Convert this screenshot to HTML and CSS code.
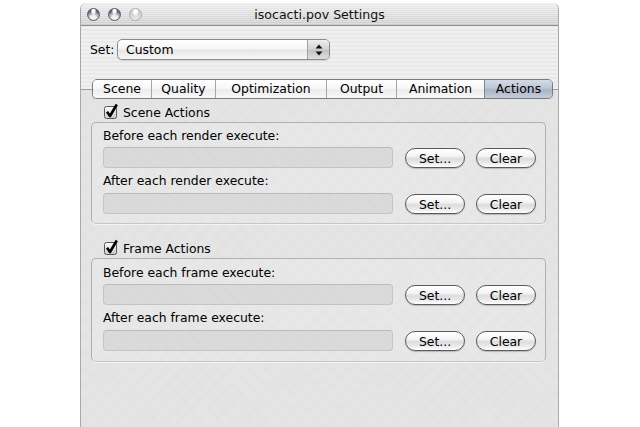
FILE: index.html
```html
<!DOCTYPE html>
<html>
<head>
<meta charset="utf-8">
<title>isocacti.pov Settings</title>
<link rel="stylesheet" href="styles.css">
</head>
<body>
<div class="window">
  <div class="titlebar">
    <div class="lights">
      <span class="light"></span>
      <span class="light"></span>
      <span class="light dim"></span>
    </div>
    <div class="title">isocacti.pov Settings</div>
    <div></div>
  </div>

  <div class="setrow">
    <span class="setlabel">Set:</span>
    <div class="popup">
      <span class="popup-text">Custom</span>
      <span class="stepper">
        <svg width="8" height="12" viewBox="0 0 8 12"><path d="M4 0.5 L7.5 4.5 L0.5 4.5 Z" fill="#111"/><path d="M4 11.5 L7.5 7.5 L0.5 7.5 Z" fill="#111"/></svg>
      </span>
    </div>
  </div>

  <div class="tabbar">
    <div class="tabs">
      <div class="tab t-scene">Scene</div>
      <div class="tab t-quality">Quality</div>
      <div class="tab t-opt">Optimization</div>
      <div class="tab t-output">Output</div>
      <div class="tab t-anim">Animation</div>
      <div class="tab t-actions selected">Actions</div>
    </div>
  </div>

  <div class="panel">
    <div class="check first">
      <svg class="cb" width="15" height="17" viewBox="0 0 15 17">
        <defs><linearGradient id="cbg" x1="0" y1="0" x2="0" y2="1"><stop offset="0" stop-color="#ffffff"/><stop offset="1" stop-color="#c8c8c8"/></linearGradient></defs>
        <rect x="0.5" y="3.5" width="12" height="12" rx="2" fill="url(#cbg)" stroke="#555"/>
        <path d="M3 8.8 L6 13 L12.8 1.5" fill="none" stroke="#000" stroke-width="2.6" stroke-linejoin="round"/>
      </svg>
      <span>Scene Actions</span>
    </div>
    <div class="group g1">
      <div class="flabel">Before each render execute:</div>
      <div class="frow">
        <div class="field"></div>
        <div class="btn b-set">Set...</div>
        <div class="btn b-clear">Clear</div>
      </div>
      <div class="flabel second">After each render execute:</div>
      <div class="frow">
        <div class="field"></div>
        <div class="btn b-set">Set...</div>
        <div class="btn b-clear">Clear</div>
      </div>
    </div>

    <div class="check later">
      <svg class="cb" width="15" height="17" viewBox="0 0 15 17">
        <defs><linearGradient id="cbg2" x1="0" y1="0" x2="0" y2="1"><stop offset="0" stop-color="#ffffff"/><stop offset="1" stop-color="#c8c8c8"/></linearGradient></defs>
        <rect x="0.5" y="3.5" width="12" height="12" rx="2" fill="url(#cbg2)" stroke="#555"/>
        <path d="M3 8.8 L6 13 L12.8 1.5" fill="none" stroke="#000" stroke-width="2.6" stroke-linejoin="round"/>
      </svg>
      <span>Frame Actions</span>
    </div>
    <div class="group g2">
      <div class="flabel">Before each frame execute:</div>
      <div class="frow">
        <div class="field"></div>
        <div class="btn b-set">Set...</div>
        <div class="btn b-clear">Clear</div>
      </div>
      <div class="flabel second">After each frame execute:</div>
      <div class="frow">
        <div class="field"></div>
        <div class="btn b-set">Set...</div>
        <div class="btn b-clear">Clear</div>
      </div>
    </div>
  </div>
</div>
</body>
</html>
```

FILE: styles.css
```css
* { box-sizing: border-box; }

html, body {
  margin: 0;
  padding: 0;
  background: #ffffff;
}

body {
  font-family: "DejaVu Sans", "Liberation Sans", sans-serif;
  font-size: 12.4px;
  color: #000;
  height: 427px;
  overflow: hidden;
}

.window {
  margin: 3px 0 0 80px;
  width: 479px;
  height: 424px;
  display: flex;
  flex-direction: column;
  border-left: 1px solid #a9a9a9;
  border-right: 1px solid #a9a9a9;
  border-radius: 6px 6px 0 0;
  overflow: hidden;
  background:
    repeating-linear-gradient(to bottom, #f0f0f0 0 2px, #e9e9e9 2px 4px);
}

/* title bar */
.titlebar {
  height: 23px;
  flex: none;
  display: grid;
  grid-template-columns: 1fr auto 1fr;
  align-items: center;
  border-bottom: 1px solid #8f8f8f;
  background:
    repeating-linear-gradient(to bottom, rgba(255,255,255,0.35) 0 1px, rgba(255,255,255,0) 1px 2px),
    linear-gradient(to bottom, #ececec 0%, #dcdcdc 55%, #cbcbcb 100%);
}

.lights {
  display: flex;
  gap: 8px;
  padding-left: 6px;
}

.light {
  width: 13px;
  height: 13px;
  border-radius: 50%;
  border: 1px solid #555b64;
  background:
    radial-gradient(circle at 50% 80%, #eef1f5 0 22%, rgba(238,241,245,0) 62%),
    radial-gradient(ellipse at 50% 16%, #ffffff 0 16%, rgba(255,255,255,0) 38%),
    linear-gradient(to bottom, #4d5460 0%, #858d99 55%, #cdd3db 100%);
}

.light.dim {
  border-color: #a9adb3;
  background:
    radial-gradient(ellipse at 50% 18%, #ffffff 0 20%, rgba(255,255,255,0) 45%),
    linear-gradient(to bottom, #bfc3c8 0%, #d7d9dc 60%, #eceef0 100%);
}

.title {
  font-size: 12.6px;
  color: #111;
  white-space: nowrap;
  padding-top: 1px;
}

/* Set popup row */
.setrow {
  flex: none;
  display: flex;
  align-items: center;
  margin-top: 13px;
  padding-left: 9px;
  height: 21px;
}

.setlabel {
  width: 27px;
}

.popup {
  width: 213px;
  height: 21px;
  display: flex;
  align-items: center;
  border: 1px solid #8a8a8a;
  border-radius: 5px;
  overflow: hidden;
  background: linear-gradient(to bottom, #ffffff 0%, #f6f6f6 45%, #e6e6e6 55%, #f7f7f7 100%);
  box-shadow: 0 1px 1px rgba(0,0,0,0.12);
}

.popup-text {
  flex: 1;
  padding-left: 8px;
}

.stepper {
  width: 22px;
  height: 100%;
  display: flex;
  align-items: center;
  justify-content: center;
  border-left: 1px solid #a2a2a2;
  background: linear-gradient(to bottom, #eeeeee 0%, #d2d2d2 50%, #c0c0c0 52%, #dedede 100%);
}

/* tabs */
.tabbar {
  flex: none;
  margin-top: 19px;
  height: 20px;
  padding-left: 11px;
  background: linear-gradient(to bottom, rgba(0,0,0,0) 0 10px, #9c9c9c 10px 11px, #e3e3e3 11px);
}

.tabs {
  display: flex;
  width: 461px;
  height: 20px;
  border: 1px solid #7c7c7c;
  border-radius: 5px;
  overflow: hidden;
  box-shadow: 0 1px 1px rgba(0,0,0,0.15);
}

.tab {
  height: 18px;
  display: flex;
  align-items: center;
  justify-content: center;
  line-height: 18px;
  color: #000;
  background: linear-gradient(to bottom, #ffffff 0%, #f7f7f7 45%, #ececec 55%, #f9f9f9 100%);
  border-left: 1px solid #a7a7a7;
}

.tab:first-child { border-left: none; }

.t-scene { width: 58px; }
.t-quality { width: 64px; }
.t-opt { width: 111px; }
.t-output { width: 70px; }
.t-anim { width: 88px; }
.t-actions { width: 68px; }

.tab.selected {
  border-left-color: #7d8796;
  background: linear-gradient(to bottom, #d4dbe5 0%, #bcc6d4 45%, #a9b5c6 55%, #c4cdd9 100%);
}

/* panel */
.panel {
  flex: 1;
  padding-left: 10px;
  background:
    repeating-linear-gradient(45deg, rgba(255,255,255,0.1) 0 1px, rgba(255,255,255,0) 1px 2px),
    repeating-linear-gradient(-45deg, rgba(0,0,0,0.015) 0 1px, rgba(0,0,0,0) 1px 2px),
    #e4e4e4;
}

.check {
  display: flex;
  align-items: flex-end;
  height: 17px;
  padding-left: 13px;
  line-height: 15px;
}

.check.first { margin-top: 4px; }
.check.later { margin-top: 15px; }

.cb {
  flex: none;
  margin-right: 4px;
}

.group {
  width: 455px;
  border: 1px solid #b0b0b0;
  border-bottom-color: #c6c6c6;
  border-radius: 5px;
  background: rgba(255,255,255,0.12);
  padding: 5px 0 9px 11px;
  box-shadow: 0 1px 0 rgba(255,255,255,0.6);
}

.g1 { margin-top: 2px; }
.g2 { margin-top: 2px; padding-top: 6px; padding-bottom: 10px; }

.flabel {
  height: 16px;
  line-height: 16px;
}

.flabel.second { margin-top: 5px; }

.frow {
  display: flex;
  align-items: flex-end;
  margin-top: 3px;
}

.flabel.second + .frow { margin-top: 4px; }

.field {
  width: 290px;
  height: 21px;
  border: 1px solid #c4c4c4;
  border-top-color: #bababa;
  border-radius: 4px;
  background:
    repeating-linear-gradient(45deg, rgba(0,0,0,0.025) 0 1px, rgba(0,0,0,0) 1px 3px),
    #dbdbdb;
}

.btn {
  width: 60px;
  height: 20px;
  display: flex;
  align-items: center;
  justify-content: center;
  border: 1px solid #5a5a5a;
  border-radius: 10px;
  color: #000;
  background: linear-gradient(to bottom, #ffffff 0%, #f4f4f4 40%, #dcdcdc 55%, #ececec 80%, #ffffff 100%);
  box-shadow: 0 1px 1px rgba(0,0,0,0.2);
}

.b-set { margin-left: 12px; }
.b-clear { margin-left: 11px; }
```
